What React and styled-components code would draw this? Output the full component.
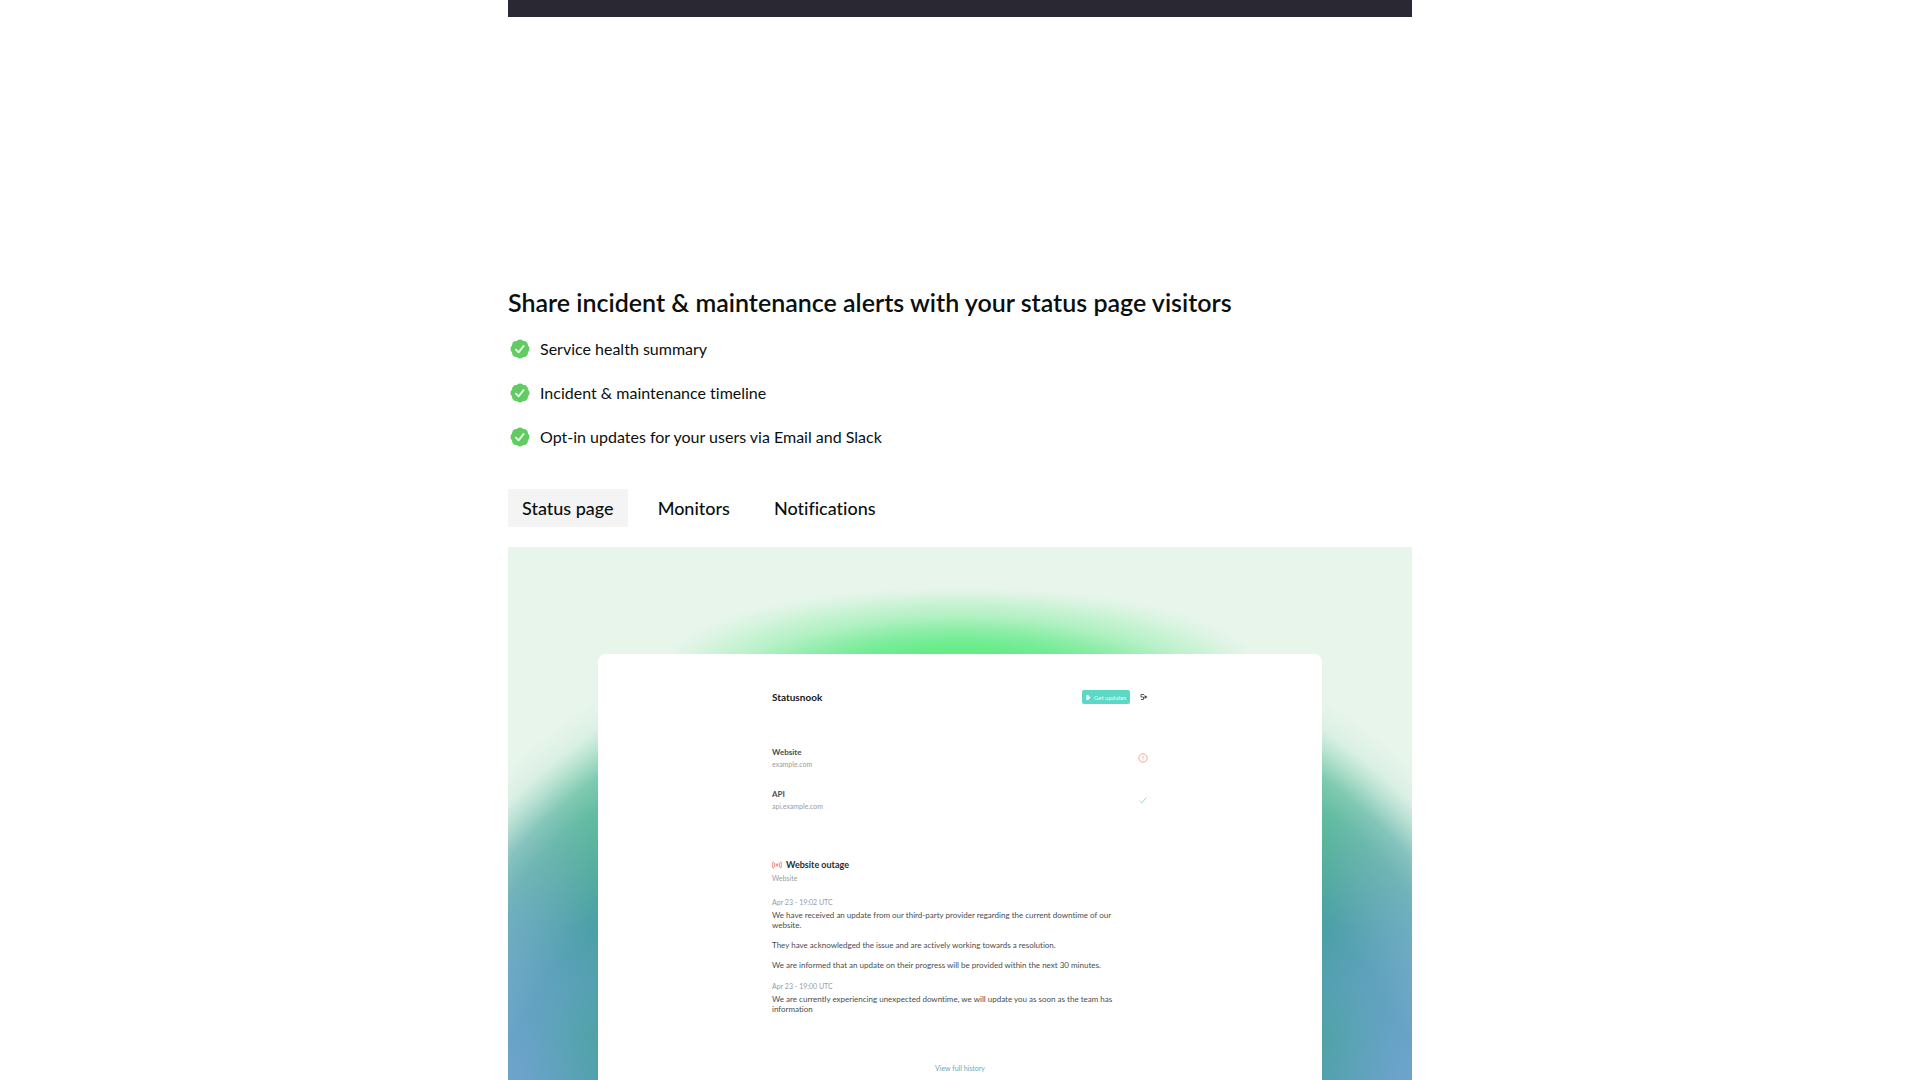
import React, { useState } from 'react';
import styled, { createGlobalStyle } from 'styled-components';

const features = [
    'Service health summary',
    'Incident & maintenance timeline',
    'Opt-in updates for your users via Email and Slack',
];

const tabs = ['Status page', 'Monitors', 'Notifications'];

const services = [
    { name: 'Website', host: 'example.com', up: false },
    { name: 'API', host: 'api.example.com', up: true },
];

const updates = [
    {
        date: 'Apr 23 - 19:02 UTC',
        text: [
            'We have received an update from our third-party provider regarding the current downtime of our website.',
            'They have acknowledged the issue and are actively working towards a resolution.',
            'We are informed that an update on their progress will be provided within the next 30 minutes.',
        ],
    },
    {
        date: 'Apr 23 - 19:00 UTC',
        text: ['We are currently experiencing unexpected downtime, we will update you as soon as the team has information'],
    },
];

// eight lobes around the middle of the badge
const lobes = [0, 45, 90, 135, 180, 225, 270, 315];

function BadgeIcon() {
    return (
        <svg width='24' height='24' viewBox='0 0 24 24' aria-hidden='true'>
            <g fill='#62cb62'>
                <circle cx='12' cy='12' r='8.6' />
                {lobes.map((deg) => (
                    <circle key={deg} cx='12' cy='5.9' r='3.4' transform={`rotate(${deg} 12 12)`} />
                ))}
            </g>
            <path d='M7.9 12.6l2.7 2.8 5.1-6.5' fill='none' stroke='#e9fbe9' strokeWidth='1.8' strokeLinecap='round' strokeLinejoin='round' />
        </svg>
    )
}

function DownIcon() {
    return (
        <svg width='10' height='10' viewBox='0 0 24 24' fill='none' stroke='#ef9189' strokeWidth='2' role='img' aria-label='Down'>
            <circle cx='12' cy='12' r='10' />
            <path d='M12 7v6M12 15.500v2' />
        </svg>
    )
}

function UpIcon() {
    return (
        <svg width='10' height='10' viewBox='0 0 24 24' fill='none' stroke='#86e3cf' strokeWidth='2.400' role='img' aria-label='Up'>
            <path d='M4 14l5 5L20 6' />
        </svg>
    )
}

function SignalIcon() {
    return (
        <svg width='10' height='10' viewBox='0 0 24 24' fill='none' stroke='#f0958c' strokeWidth='2.800' aria-hidden='true'>
            <circle cx='12' cy='12' r='2' fill='#f0958c' />
            <path d='M7.500 7a7 7 0 0 0 0 10M16.500 7a7 7 0 0 1 0 10M4 4a11.500 11.500 0 0 0 0 16M20 4a11.500 11.500 0 0 1 0 16' />
        </svg>
    )
}

function App() {
    const [active, setActive] = useState('Status page');

    return (
        <Page>
            <GlobalStyle />
            <PreviousPanel />
            <Title>Share incident & maintenance alerts with your status page visitors</Title>
            <FeatureList>
                {features.map((feature) => (
                    <Feature key={feature}>
                        <BadgeIcon />
                        <span>{feature}</span>
                    </Feature>
                ))}
            </FeatureList>
            <Tabs>
                {tabs.map((tab) => (
                    <Tab key={tab} type='button' $active={tab === active} onClick={() => setActive(tab)}>
                        {tab}
                    </Tab>
                ))}
            </Tabs>
            <Showcase>
                <Card>
                    <Column>
                        <CardHeader>
                            <Brand>Statusnook</Brand>
                            <UpdatesButton type='button'>
                                <svg width='5' height='5' viewBox='0 0 5 6' aria-hidden='true'>
                                    <path d='M0 0h2l3 3-3 3H0z' fill='#fff' />
                                </svg>
                                Get updates
                            </UpdatesButton>
                            <LoginButton type='button' aria-label='Log in'>
                                <svg width='8' height='6' viewBox='0 0 8 6' aria-hidden='true'>
                                    <path d='M4 .5H1V3h2.500v2.500H1' fill='none' stroke='#555' />
                                    <path d='M4.500 1L7.500 3l-3 2z' fill='#444' />
                                </svg>
                            </LoginButton>
                        </CardHeader>
                        <Services>
                            {services.map((service) => (
                                <Service key={service.name}>
                                    <div>
                                        <ServiceName>{service.name}</ServiceName>
                                        <Muted>{service.host}</Muted>
                                    </div>
                                    {service.up ? <UpIcon /> : <DownIcon />}
                                </Service>
                            ))}
                        </Services>
                        <IncidentTitle>
                            <SignalIcon />
                            <span>Website outage</span>
                        </IncidentTitle>
                        <Muted>Website</Muted>
                        <Timeline>
                            {updates.map((update) => (
                                <div key={update.date}>
                                    <Muted>{update.date}</Muted>
                                    <UpdateText>
                                        {update.text.map((line) => (
                                            <p key={line}>{line}</p>
                                        ))}
                                    </UpdateText>
                                </div>
                            ))}
                        </Timeline>
                        <History href='#history'>View full history</History>
                    </Column>
                </Card>
            </Showcase>
        </Page>
    )
}

const GlobalStyle = createGlobalStyle`
    * {
        box-sizing: border-box;
        font-variant-ligatures: none;
    }
    body {
        margin: 0;
        background: #fff;
        color: #0b100f;
        font-family: Lato, "Liberation Sans", sans-serif;
    }
    h2, h3, h4, p, ul {
        margin: 0;
        padding: 0;
    }
    button {
        border: 0;
        font-family: inherit;
        cursor: pointer;
    }
    svg {
        flex-shrink: 0;
    }
`;

const Page = styled.main`
    display: flex;
    flex-direction: column;
    max-width: 904px;
    min-height: 100vh;
    margin: 0 auto;
`;

const PreviousPanel = styled.div`
    height: 17px;
    margin-bottom: 270px;
    background: #2a2832;
`;

const Title = styled.h2`
    margin-bottom: 20px;
    font-size: 25px;
    font-weight: 600;
    line-height: 30px;
`;

const FeatureList = styled.ul`
    display: flex;
    flex-direction: column;
    gap: 20px;
    margin-bottom: 40px;
    list-style: none;
`;

const Feature = styled.li`
    display: flex;
    align-items: center;
    gap: 8px;
    font-size: 16px;
    line-height: 24px;
`;

const Tabs = styled.div`
    display: flex;
    gap: 16px;
    margin-bottom: 20px;
`;

const Tab = styled.button`
    height: 38px;
    padding: 0 14px;
    border-radius: 2px;
    background: ${(props) => (props.$active ? '#f4f4f5' : 'transparent')};
    color: inherit;
    font-size: 18px;
    font-weight: 500;
`;

const Showcase = styled.section`
    display: flex;
    flex-grow: 1;
    flex-direction: column;
    padding: 107px 10% 0;
    background:
        radial-gradient(ellipse 300px 82px at 50% 122px, rgba(95, 238, 130, 0.95) 20%, rgba(95, 238, 130, 0.4) 60%, rgba(95, 238, 130, 0) 100%),
        radial-gradient(circle at 50% 715px, rgba(231, 245, 235, 0) 500px, rgba(231, 245, 235, 0.18) 580px, rgba(231, 245, 235, 0.35) 605px, rgba(231, 245, 235, 0.7) 628px, rgba(231, 245, 235, 0.92) 645px, #e7f5eb 670px),
        radial-gradient(ellipse 130px 360px at 0 560px, #6ba3cb 15%, rgba(107, 163, 203, 0) 100%),
        radial-gradient(ellipse 130px 360px at 100% 560px, #6ba3cb 15%, rgba(107, 163, 203, 0) 100%),
        linear-gradient(#66d79b 100px, #48b891 210px, #46a993 315px, #449f9d 385px, #4b9fa6 435px, #41a393 490px, #44a09b 533px);
`;

const Card = styled.div`
    flex-grow: 1;
    padding: 36px 24px 0;
    border-radius: 8px 8px 0 0;
    background: #fff;
`;

const Column = styled.div`
    display: flex;
    flex-direction: column;
    max-width: 376px;
    margin: 0 auto;
    color: #4a4c4d;
    font-size: 8px;
    line-height: 12px;
`;

const CardHeader = styled.div`
    display: flex;
    align-items: center;
    gap: 10px;
    height: 14px;
    margin-bottom: 42px;
`;

const Brand = styled.h3`
    margin-right: auto;
    color: #161819;
    font-size: 10px;
    font-weight: 700;
`;

const UpdatesButton = styled.button`
    display: flex;
    align-items: center;
    justify-content: center;
    gap: 3px;
    width: 48px;
    height: 14px;
    padding: 0;
    border-radius: 2px;
    background: #5cd9c6;
    color: #e4fbf7;
    font-size: 6px;
    white-space: nowrap;
`;

const LoginButton = styled.button`
    display: flex;
    align-items: center;
    padding: 0;
    background: transparent;
`;

const Services = styled.div`
    display: flex;
    flex-direction: column;
    gap: 18px;
    margin-bottom: 46px;
`;

const Service = styled.div`
    display: flex;
    align-items: center;
    justify-content: space-between;
`;

const ServiceName = styled.h4`
    font-size: 8px;
    font-weight: 700;
`;

const Muted = styled.p`
    color: #9a9c9e;
    font-size: 7px;
    line-height: 12px;
`;

const IncidentTitle = styled.h3`
    display: flex;
    align-items: center;
    gap: 4px;
    color: #2a2c2d;
    font-size: 9px;
    font-weight: 700;
    line-height: 14px;
`;

const Timeline = styled.div`
    display: flex;
    flex-direction: column;
    gap: 10px;
    margin: 12px 0 48px;
`;

const UpdateText = styled.div`
    display: flex;
    flex-direction: column;
    gap: 10px;
    max-width: 356px;
    margin-top: 2px;
    line-height: 10px;
`;

const History = styled.a`
    align-self: center;
    color: #67abb8;
    font-size: 7px;
    text-decoration: none;
`;

export default App
